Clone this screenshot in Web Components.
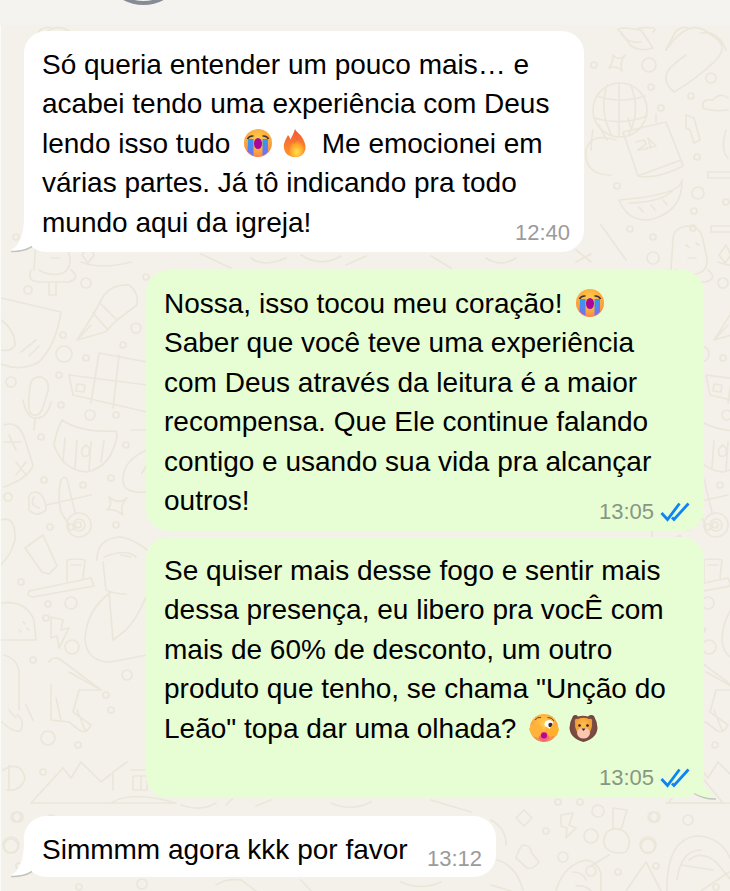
<!DOCTYPE html>
<html lang="pt-BR"><head><meta charset="utf-8"><title>Conversa</title>
<style>html,body{margin:0;padding:0;background:#f4f3ef;}body{width:730px;height:891px;overflow:hidden;font-family:"Liberation Sans",Arial,sans-serif;}</style>
</head><body>
<chat-screen>
<chat-bubble side="in" time="12:40" tail style="--w:560px;--mt:6px;--h:221px;--tb:6px">Só queria entender um pouco mais… e<br>acabei tendo uma experiência com Deus<br>lendo isso tudo <chat-emoji kind="cry"></chat-emoji> <chat-emoji kind="fire"></chat-emoji> Me emocionei em<br>várias partes. Já tô indicando pra todo<br>mundo aqui da igreja!</chat-bubble>
<chat-bubble side="out" time="13:05" ticks style="--w:558px;--mt:18px;--h:261px;--tb:6px">Nossa, isso tocou meu coração! <chat-emoji kind="cry"></chat-emoji><br>Saber que você teve uma experiência<br>com Deus através da leitura é a maior<br>recompensa. Que Ele continue falando<br>contigo e usando sua vida pra alcançar<br>outros!</chat-bubble>
<chat-bubble side="out" time="13:05" ticks tail style="--w:558px;--mt:6px;--h:261px;--tb:7px">Se quiser mais desse fogo e sentir mais<br>dessa presença, eu libero pra vocÊ com<br>mais de 60% de desconto, um outro<br>produto que tenho, se chama "Unção do<br>Leão" topa dar uma olhada? <chat-emoji kind="peek"></chat-emoji> <chat-emoji kind="lion"></chat-emoji></chat-bubble>
<chat-bubble side="in" time="13:12" tail style="--w:472px;--mt:18px;--h:61px;--tb:5px">Simmmm agora kkk por favor</chat-bubble>
</chat-screen>
<script>
class ChatEmoji extends HTMLElement{
  constructor(){super();const k=this.getAttribute('kind');const s=this.attachShadow({mode:'open'});
  const defs=`<defs>
  <radialGradient id="f" cx=".5" cy=".35" r=".7"><stop offset="0" stop-color="#ffcf4a"/><stop offset=".65" stop-color="#fca63a"/><stop offset="1" stop-color="#f27a5a"/></radialGradient>
  <linearGradient id="t" x1="0" y1="0" x2="0" y2="1"><stop offset="0" stop-color="#2f9bf0"/><stop offset="1" stop-color="#7a6cf5"/></linearGradient>
  <linearGradient id="fl" x1=".5" y1="0" x2=".5" y2="1"><stop offset="0" stop-color="#f2553a"/><stop offset="1" stop-color="#ff9a2a"/></linearGradient>
  <radialGradient id="fi" cx=".55" cy=".75" r=".65"><stop offset="0" stop-color="#ffe14a"/><stop offset=".6" stop-color="#ffa52c"/><stop offset="1" stop-color="#f8622f"/></radialGradient>
  <radialGradient id="m" cx=".5" cy=".45" r=".6"><stop offset="0" stop-color="#9a5a44"/><stop offset="1" stop-color="#6a4240"/></radialGradient>
  <radialGradient id="lf" cx=".5" cy=".35" r=".7"><stop offset="0" stop-color="#ffc04a"/><stop offset="1" stop-color="#e98c2c"/></radialGradient>
  </defs>`;
  const art={
  cry:[28,28,6,0,`<circle cx="14" cy="14" r="14" fill="url(#f)"/><path d="M3.500 10Q5 6.500 9.500 7M24.500 10Q23 6.500 18.500 7" stroke="#3e3238" stroke-width="1.600" fill="none"/><ellipse cx="14" cy="14.500" rx="4" ry="5.500" fill="#a8089a"/><path d="M4 10h5.500V26.500Q6 25.500 3.500 22.500ZM18.500 10H24V22.500Q22 25.500 18.500 26.500Z" fill="url(#t)"/>`],
  fire:[23,28,3,8,`<path d="M12 0C14 4 19 6 21 12C24 18 23 28 12 28C3 28 0 21 1 15C2 11 4 8 5 6C6.500 8 7 9 7.500 10.500C9 7 11 4 12 0Z" fill="url(#fl)"/><path d="M13 8C16 12 21 15 21 20.500C21 25 17 28 12.500 28C8 28 5 25 5 21C5 17 8.500 14.500 10 12C11 13 11.500 14 11.800 15C12.800 13 13.500 11 13 8Z" fill="url(#fi)"/>`],
  peek:[30,28,5,0,`<circle cx="15" cy="14" r="14" fill="url(#f)"/><path d="M6 6Q8.500 2.500 12 3.500M18.500 3.500Q22.500 3 25 7" stroke="#6a4a2a" stroke-width="1" fill="none"/><circle cx="20" cy="10.500" r="4.500" fill="#fff"/><circle cx="21.500" cy="11" r="2.200" fill="#3a2a2a"/><path d="M9.500 24Q14.500 31 20.500 24L17.500 18H11.500Z" fill="#f4667a"/><circle cx="15" cy="21.500" r="3" fill="#b5088c"/><path d="M0 15L3 10 5 14 6 7 8 12 10.500 8 11.500 13 13.500 12 12.500 19 9.500 24 3 22Z" fill="#ffb33a"/><path d="M16.500 12L20.500 15 24.500 9 25.500 13 28.500 10 30 16 27.500 22 20.500 22 16.500 17Z" fill="#ffb02f"/>`],
  lion:[29,28,2,0,`<path d="M4 2Q7 0 9 2.500Q14 1 19 2.500Q22 0 25 2Q28 7 28.500 14Q28 24 14.500 28Q1 24 .500 14Q1 7 4 2Z" fill="url(#m)"/><path d="M6 9Q5 4 9 5Q14.500 2.500 20 5Q24 4 23 9Q24 18 14.500 24Q5 18 6 9Z" fill="url(#lf)"/><circle cx="10.500" cy="11.500" r="1.300" fill="#2b2020"/><circle cx="18.500" cy="11.500" r="1.300" fill="#2b2020"/><ellipse cx="14.500" cy="19" rx="6.500" ry="5.500" fill="#f9c6ae"/><path d="M12.500 14.500h4l-2 2.500Z" fill="#3a2422"/>`]
  };
  const [w,h,ml,mr,body]=art[k];
  s.innerHTML=`<style>:host{display:inline-block;width:${w}px;height:${h}px;vertical-align:-4px;margin:0 ${mr}px 0 ${ml}px;line-height:0}svg{display:block}</style><svg viewBox="0 0 ${w} ${h}" width="${w}" height="${h}" aria-hidden="true">${defs}${body}</svg>`;
  }
}
class ChatBubble extends HTMLElement{
  constructor(){super();const out=this.getAttribute('side')==='out';const tail=this.hasAttribute('tail');
  const s=this.attachShadow({mode:'open'});
  const fill=out?'#e7fdd3':'#fff';
  const tailSvg=!tail?'':out
  ?`<svg class="tail" width="34" height="36" viewBox="0 0 34 36" aria-hidden="true"><path d="M8 29Q18 35.500 30 35" fill="none" stroke="#c4c4be" stroke-width="1.500"/><path d="M14 0Q14 26 30.500 34Q18 34.500 8 29L0 20Z" fill="${fill}"/></svg>`
  :`<svg class="tail" width="34" height="36" viewBox="0 0 34 36" aria-hidden="true"><path d="M22 29.500Q13 35 1 34.500" fill="none" stroke="#c4c4be" stroke-width="1.500"/><path d="M14 0Q14 26 .500 33.500Q13 34 22 28.500L30 20Z" fill="${fill}"/></svg>`;
  s.innerHTML=`<style>
  :host{display:block;position:relative;box-sizing:border-box;width:var(--w);height:var(--h);margin-top:var(--mt);
    align-self:${out?'flex-end':'flex-start'};background:${fill};border-radius:22px;padding:13.5px 18px 0 18px;
    font:28px/39.6px "Liberation Sans",Arial,sans-serif;color:#000}
  .meta{position:absolute;right:14px;bottom:var(--tb);display:flex;align-items:center;gap:6px;font-size:22px;line-height:26px;color:${out?'#8a9684':'#9b9b9b'}}
  .tail{position:absolute;${out?'right:-16px;bottom:-2px;':'left:-14px;bottom:-1px;'}}
  .check{display:block}
  </style><slot></slot><div class="meta"><span>${this.getAttribute('time')}</span>${this.hasAttribute('ticks')?'<svg class="check" width="30" height="20" viewBox="0 0 30 20" aria-hidden="true"><path d="M1.500 11L7.500 17.500L19.500 1.500M12 15.500L14 17.500L28.500 1.500" fill="none" stroke="#0d84f6" stroke-width="2.800"/></svg>':''}</div>${tailSvg}`;
  }
}
class DoodleWall extends HTMLElement{
  constructor(){super();const s=this.attachShadow({mode:'open'});
  /* one tile of the wallpaper; it repeats every 637px across */
  const circles=[[85,283,5],[27,290,4],[145,277,3],[63,354,8],[85,358,3],[62,335,3],[122,345,3],[135,328,5],[10,382,5],[58,375,3],[60,405,3],[89,415,5],[115,415,3],[40,437,3],[125,445,3],[43,480,3],[82,485,3],[110,478,3],[7,497,4],[70,527,3],[77,525,3],[115,525,3],[49,527,3],[20,582,3],[47,604,3],[70,603,6],[45,618,3],[71,647,7],[32,660,3],[126,675,5],[105,695,3],[110,710,3],[47,738,7],[77,745,3],[42,772,3],
   [15,817,5],[10,845,8],[78,887,3],[141,884,5],[593,65,3],[648,65,7],[73,78,5],[650,87,3],[53,96,3],[660,108,3],[59,157,3],[60,193,6],[88,202,3],[616,186,3],[56,211,3],[55,228,3],[629,229,3],[15,237,3],[652,258,6],[545,831,3],[597,811,6],[562,857,5],[590,871,5],[590,836,7],[557,802,3],[579,802,3],[17,817,5],[50,820,5],[10,846,7],[617,872,3],[18,866,3]];
  const paths=[
  /* popsicle + page */'M30 270Q25 282 40 282H68Q80 278 70 270M48 282V295H55V282',
  'M0 298L60 312Q55 345 38 362Q20 372 0 364M20 352L35 340M28 356L38 346M0 320Q14 330 14 345Q10 352 0 350',
  /* pen */'M76 340L92 315L103 295Q112 284 128 285Q138 292 136 305L116 320L104 332L76 340ZM92 313L107 330M100 304L116 320M78 338L90 325',
  /* grid + inner square */'M68 375L146 385M98 353L90 403M146 357V430H130M68 375L72 395L146 412M98 353L146 362M118 355L112 408M76 384l8 1-1 7-8-1Z',
  /* mic */'M29 387Q30 376 40 377Q49 380 47 391L41 410Q37 418 30 414Q26 410 29 387ZM22 400Q26 420 36 418Q46 418 50 402M34 418L33 430',
  /* shield */'M61 420Q80 433 115 431L116 436Q110 468 85 472Q62 470 53 445Q55 432 61 420ZM64 438L62 462M76 440L74 468M90 442L88 470M103 440L100 462M85 445Q78 450 82 456Q90 458 88 448Z',
  /* calculator */'M3 425Q18 420 24 440L32 465Q28 478 3 487M8 435L15 450M3 442H20M15 462L25 475M25 462L15 475',
  /* clock */'M146 450Q122 460 122 480Q122 494 146 492M146 465L141 473',
  /* scissors */'M28 502Q26 492 36 492Q45 496 45 510Q36 518 28 510ZM33 497Q28 505 38 508M45 505L90 495M60 480Q56 495 60 512L68 525M60 480Q66 472 68 488L74 512',
  'M66 524A12 12 0 1 0 90 526A12 12 0 1 0 66 524M72 525A6 6 0 1 0 84 525A6 6 0 1 0 72 525',
  /* star */'M108 497Q118 505 126 498Q118 506 122 515Q114 508 106 510Q112 505 108 497Z',
  'M0 520Q15 515 14 540Q10 555 0 565',
  /* tube */'M24 548L42 535L56 566L48 574L41 572ZM48 574L55 567',
  /* toothbrush */'M28 591L90 578L93 586L32 597Q25 596 28 591ZM66 581V560Q75 558 84 560L82 578M70 565h10',
  /* man */'M96 560Q96 538 120 537Q135 540 146 550M103 557Q125 548 135 557M102 562L105 590Q114 594 125 594M110 592Q85 610 84 640Q86 662 110 662L146 655M108 592L112 640M146 595Q135 620 125 630L112 640M120 555L130 557',
  /* taco */'M0 603Q25 600 33 620L35 640H0M22 622l2 2M18 630l2 2M26 628l2 2',
  /* bolt */'M50 617L62 620L60 630L68 628L58 648L56 636L50 638Z',
  /* rocket */'M48 662Q52 655 60 660L100 690L78 690L72 712L90 725Q85 735 78 730L68 722L50 720L50 685M60 720L55 698M100 690L68 672M76 710L84 730',
  /* left lower */'M3 655Q15 658 18 670V710M16 715Q24 720 20 730M8 710L15 718M25 705L32 720M1 722Q15 735 20 730',
  /* berries */'M2 770Q20 760 24 778Q20 792 6 790M8 765V790',
  /* mountain + house */'M30 803L62 768L70 778L80 762L100 782L110 774M30 803H175M112 790V772L126 762M130 770L146 770V786M132 776H146V790H132ZM140 776V790M110 803Q130 790 175 803',
  /* top-right */
  'M620 32Q612 28 625 28L640 30 652 48Q640 52 630 46ZM620 34Q628 44 640 42M652 32Q660 26 637 28M28 50L38 31Q45 26 50 28',
  'M28 50Q52 15 73 35Q92 45 78 60Q60 78 36 92Q22 80 32 68Q40 60 48 55M63 33Q80 30 88 50',
  'M612 55Q618 62 624 55Q618 63 621 71Q615 65 608 68Q612 63 612 55Z',
  /* globe */'M592 110A27 27 0 1 1 646 110A27 27 0 1 1 592 110M606 85Q598 110 610 134M630 86Q640 110 628 134M596 96Q620 104 644 96M593 118Q620 126 646 116M618 83V136',
  /* small rocket */'M48 115L56 118 62 140 56 143 52 130 48 128Z',
  /* cloud */'M65 108Q63 98 75 100Q82 92 90 98M65 108Q75 112 90 110',
  /* fruit */'M88 130Q82 150 90 158',
  /* blob */'M615 140Q590 132 585 150Q583 175 610 175M606 140Q600 130 598 125M592 130Q590 140 590 150',
  /* calendar */'M622 132L665 122L680 160L637 176ZM630 128L627 118M655 122L655 114M637 176Q655 180 682 166L680 160',
  'M635 142l8-2 2 4-8 6 9-1M650 148l-3-10 8 8-10 2',
  /* bar */'M70 172H95Q100 175 95 178H70ZM73 226H95Q100 229 95 232H73Z',
  /* watermelon */'M618 200Q680 195 681 180Q682 210 652 219Q628 224 618 200ZM628 203Q662 202 672 190M638 207l4 5M650 205l4 5M662 200l4 5',
  /* face bar */'M33 270L35 240Q35 228 49 226Q63 226 65 240L69 258Q70 272 58 274Q48 276 38 270M48 245l3 2M58 243l3 2M50 258h8M88 245l5 10-6 8-6-8Z',
  /* triangle */'M600 225L625 260M575 250L590 262',
  /* bottom right */
  'M523 810L531 818L523 826L515 818Z',
  'M560 815L572 813 568 825 575 828 565 838 566 828 560 826Z',
  'M522 845Q530 845 530 852L538 862Q532 870 526 868L515 858Q518 848 522 845Z',
  /* key */'M612 808L626 810 620 830 612 828ZM606 832Q615 825 625 833Q632 842 625 852Q612 855 605 848Q600 840 606 832ZM608 855L590 866',
  /* pear */'M555 891Q562 865 585 860Q598 862 600 875L600 891M572 872Q582 872 585 880M575 886Q585 885 590 891',
  /* tri */'M625 891L645 862L660 891',
  /* shrimp */'M666 891Q665 840 695 836Q720 836 730 860M676 880Q680 850 700 850M688 860Q700 850 715 862L730 880M680 865L712 870M700 891L728 872',
  /* hat tri over bubble 4 */'M665 803H722L695 770',
  /* strip under bubble 1 */'M80 262Q100 270 130 262M200 254L230 268M250 258Q262 268 285 258M300 255Q320 268 340 256M345 265L365 256M430 256L450 268M485 258Q500 268 515 258M575 262L590 254',
  /* strip under bubble 3 */'M225 805L232 798M255 806L270 800M330 803Q350 812 370 802M430 800L470 812M180 805Q200 812 215 803M490 820Q505 828 505 845M496 860Q515 865 522 890',
  /* bottom */'M215 885Q225 878 240 880L255 891M300 880L310 891M400 882Q420 891 440 882M490 885L510 891'
  ];
  s.innerHTML=`<style>:host{position:absolute;inset:0;display:block;overflow:hidden}svg{display:block}</style>
  <svg width="730" height="866" viewBox="0 25 730 866" aria-hidden="true"><defs><g id="tile">${circles.map(c=>`<circle cx="${c[0]}" cy="${c[1]}" r="${c[2]}"/>`).join('')}${paths.map(d=>`<path d="${d}"/>`).join('')}</g></defs><g fill="none" stroke="#ebe6da" stroke-width="1.700" stroke-linecap="round" stroke-linejoin="round"><use href="#tile"/><use href="#tile" x="637"/></g></svg>`;
  }
}
class ChatScreen extends HTMLElement{
  constructor(){super();const s=this.attachShadow({mode:'open'});
  s.innerHTML=`<style>
  :host{display:flex;flex-direction:column;width:730px;height:891px;background:#f4f3ef;overflow:hidden}
  header{height:25px;flex:none;position:relative;background:#f4f3ef;overflow:hidden}
  .avatar{position:absolute;box-sizing:border-box;left:101px;top:-80px;width:85px;height:85px;border-radius:50%;border:4px solid #878b96}
  main{position:relative;flex:1;background:#f4f1ea;border-left:1px solid #fafaf7;display:flex;flex-direction:column;padding:0 26px 0 23px}
  .list{position:relative;display:flex;flex-direction:column}
  </style><header><div class="avatar"></div></header><main><doodle-wall></doodle-wall><div class="list"><slot></slot></div></main>`;
  }
}
customElements.define('chat-emoji',ChatEmoji);
customElements.define('chat-bubble',ChatBubble);
customElements.define('doodle-wall',DoodleWall);
customElements.define('chat-screen',ChatScreen);
</script>
</body></html>
